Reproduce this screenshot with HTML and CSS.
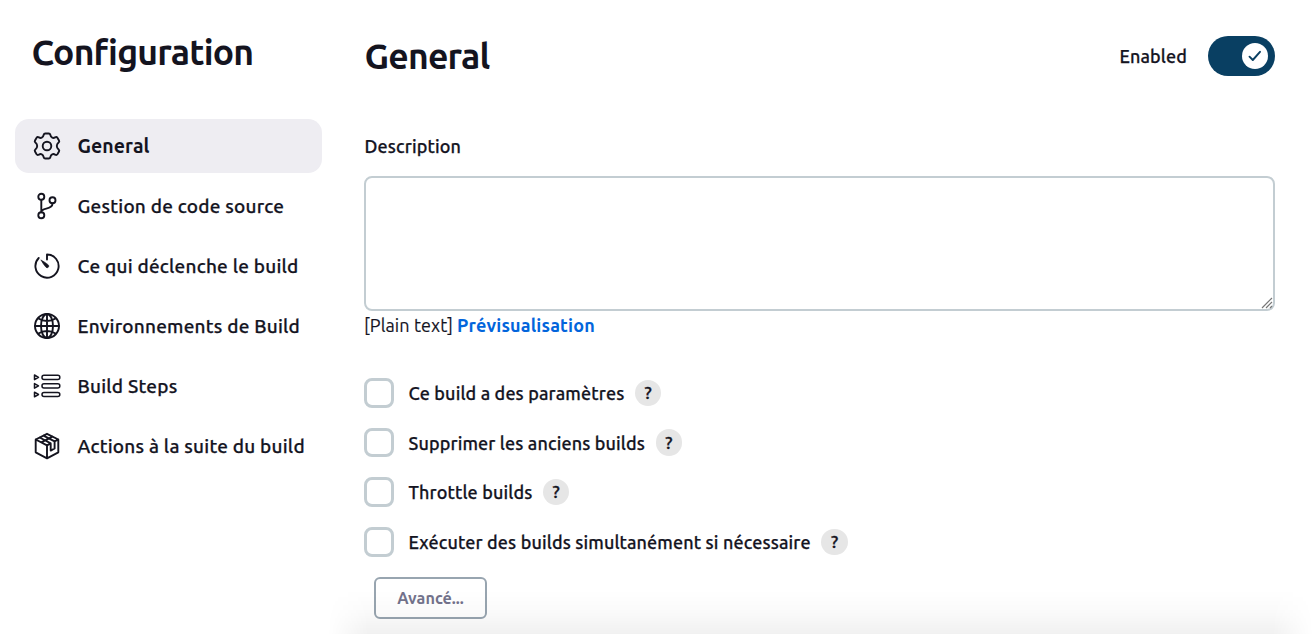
FILE: index.html
```html
<!DOCTYPE html>
<html lang="fr">
<head>
<meta charset="utf-8">
<title>Configuration</title>
<link rel="stylesheet" href="styles.css">
</head>
<body>
<div class="page">
  <aside class="sidebar">
    <h1 class="title">Configuration</h1>
    <nav class="menu">
      <a class="item active">
        <svg class="icon" viewBox="0 0 28 28"><path d="M12.300 1.500h3.400q1.300 0 1.600 1.300.5 2.300 1.900 2.900 1.400.6 2.900-.3 1.500-.8 2.300.3l1.600 2.700q.7 1.200-.4 2.100-1.800 1.500-1.800 3.500t1.800 3.500q1.100.9.400 2.100l-1.600 2.700q-.8 1.100-2.300.3-1.500-.9-2.900-.3-1.400.6-1.900 2.900-.3 1.300-1.600 1.300h-3.400q-1.300 0-1.600-1.300-.5-2.300-1.900-2.900-1.400-.6-2.900.3-1.500.8-2.300-.3L2 19.600q-.7-1.200.4-2.100 1.800-1.500 1.800-3.500T2.400 10.500Q1.300 9.600 2 8.400l1.600-2.700q.8-1.100 2.300-.3 1.500.9 2.900.3 1.400-.6 1.900-2.900.3-1.300 1.600-1.300z"/><circle cx="14" cy="14" r="4.300"/></svg>
        <span>General</span></a>
      <a class="item">
        <svg class="icon" viewBox="0 0 28 28"><circle cx="8.300" cy="4.800" r="3"/><circle cx="8.300" cy="23.200" r="3"/><circle cx="19.500" cy="8.300" r="3"/><path d="M8.300 8v12M19.500 11.500c0 7-11.200 3.500-11.200 8.700"/></svg>
        <span>Gestion de code source</span></a>
      <a class="item">
        <svg class="icon" viewBox="0 0 28 28"><path d="M14 7.500V2.500A11.600 11.600 0 1 1 5.700 6"/><path class="solid" d="M8.200 8.200c2.600 1.400 5.300 3.100 7.100 4.700a1.600 1.600 0 0 1-2.300 2.300c-1.700-1.800-3.500-4.400-4.800-7z"/></svg>
        <span>Ce qui déclenche le build</span></a>
      <a class="item">
        <svg class="icon" viewBox="0 0 28 28"><circle cx="14" cy="14" r="12"/><ellipse cx="14" cy="14" rx="6" ry="12"/><path d="M14 2v24M2 14h24M5.500 6.500c5 3.300 12 3.300 17 0M5.500 21.500c5-3.300 12-3.300 17 0"/></svg>
        <span>Environnements de Build</span></a>
      <a class="item">
        <svg class="icon thin" viewBox="0 0 28 28"><rect x="9" y="3.200" width="17.800" height="4.200" rx="2"/><rect x="9" y="11.800" width="17.800" height="4.200" rx="2"/><rect x="9" y="20.400" width="17.800" height="4.200" rx="2"/><path d="M1.500 3l4 2.300-4 2.300zM1.500 11.600l4 2.300-4 2.300zM1.500 20.200l4 2.300-4 2.300z"/></svg>
        <span>Build Steps</span></a>
      <a class="item">
        <svg class="icon box" viewBox="0 0 28 28"><path d="M14 1.800l11.300 5.700v12.800L14 26.300 2.700 20.300V7.500zM2.700 7.500L14 13.300l3.700-1.900M21.600 9.400l3.700-1.900M14 13.300v13M6.700 5.500l11 5.900v7.200l3.900-2.100V9.400L10.500 3.600M8.300 10.300l11.200-5.700"/></svg>
        <span>Actions à la suite du build</span></a>
    </nav>
  </aside>
  <main class="main">
    <header class="head">
      <h2 class="title">General</h2>
      <div class="enabled"><span class="label">Enabled</span>
        <span class="toggle"><span class="knob"><svg class="check" viewBox="0 0 14 14"><path d="M1.500 7.700l3.300 3.300 7.200-8.200"/></svg></span></span></div>
    </header>
    <label class="label desc" for="description">Description</label>
    <div class="field">
      <textarea id="description" class="area"></textarea>
      <svg class="grip" viewBox="0 0 12 12"><path d="M1 11L11 1M5 11l6-6M9 11l2-2"/></svg>
    </div>
    <div class="preview"><span class="plain">[Plain text]</span><a class="link">Prévisualisation</a></div>
    <div class="options">
      <div class="option"><span class="checkbox"></span><span class="label">Ce build a des paramètres</span><span class="help">?</span></div>
      <div class="option"><span class="checkbox"></span><span class="label">Supprimer les anciens builds</span><span class="help">?</span></div>
      <div class="option"><span class="checkbox"></span><span class="label">Throttle builds</span><span class="help">?</span></div>
      <div class="option"><span class="checkbox"></span><span class="label">Exécuter des builds simultanément si nécessaire</span><span class="help">?</span></div>
    </div>
    <button class="advanced">Avancé...</button>
  </main>
  <div class="fade"></div>
</div>
</body>
</html>
```
FILE: styles.css
```css
* { box-sizing: border-box; }
body { margin: 0; background: #fff; color: #14141f; font-family: Ubuntu, "Noto Sans", sans-serif; }
.page { position: relative; display: flex; width: 1313px; height: 635px; overflow: hidden; }
.sidebar { width: 364px; padding: 28px 42px 0 15px; }
.title { margin: 0; font-size: 35.500px; line-height: 48px; font-weight: 700; letter-spacing: -.8px; white-space: nowrap; }
.sidebar .title { padding-left: 16.500px; }
.menu { display: flex; flex-direction: column; gap: 6px; margin-top: 43px; }
.item { display: flex; align-items: center; gap: 16.500px; height: 54px; padding-left: 18px; border-radius: 14px; font-size: 19px; font-weight: 500; letter-spacing: .22px; -webkit-text-stroke: .25px #14141f; white-space: nowrap; }
.active { background: #eeedf2; font-size: 19.500px; font-weight: 700; letter-spacing: .05px; -webkit-text-stroke: 0; }
.icon { width: 28px; height: 28px; flex: none; fill: none; stroke: #14141f; stroke-width: 1.900; stroke-linejoin: round; stroke-linecap: round; }
.icon.thin { stroke-width: 1.500; }
.icon.box { stroke-width: 1.900; }
.icon .solid { fill: #14141f; stroke: #14141f; stroke-width: .6; }
.main { width: 911px; padding-top: 32px; display: flex; flex-direction: column; align-items: flex-start; }
.head { display: flex; justify-content: space-between; width: 100%; height: 48px; padding-left: .5px; }
.enabled { display: flex; align-items: center; gap: 21px; }
.label { font-size: 18px; line-height: 26px; font-weight: 500; letter-spacing: .13px; -webkit-text-stroke: .25px #14141f; white-space: nowrap; }
.toggle { display: flex; align-items: center; justify-content: flex-end; width: 67px; height: 40px; padding-right: 7px; border-radius: 20px; background: #093f62; }
.knob { display: flex; align-items: center; justify-content: center; width: 26px; height: 26px; border-radius: 50%; background: #fff; }
.check { width: 14px; height: 14px; fill: none; stroke: #093f62; stroke-width: 1.900; stroke-linecap: round; stroke-linejoin: round; }
.desc { margin: 53px 0 0 .5px; }
.field { position: relative; margin-top: 17px; }
.area { display: block; width: 911px; height: 135px; margin: 0; border: 2px solid #c3cdd2; border-radius: 8px; background: #fff; resize: none; outline: none; }
.grip { position: absolute; right: 2px; bottom: 2px; width: 12px; height: 12px; fill: none; stroke: #777; stroke-width: 1.200; }
.preview { display: flex; gap: 4px; margin: 1px 0 0; font-size: 18px; line-height: 26px; white-space: nowrap; }
.plain { letter-spacing: .1px; -webkit-text-stroke: .15px #14141f; }
.link { color: #0265dc; font-weight: 700; letter-spacing: .16px; }
.options { display: flex; flex-direction: column; gap: 20px; margin-top: 40px; }
.option { display: flex; align-items: center; height: 29.700px; }
.checkbox { width: 30px; height: 29.700px; margin-right: 14.500px; border: 3px solid #c3cdd2; border-radius: 8px; }
.help { display: flex; align-items: center; justify-content: center; width: 26.500px; height: 26.500px; margin-left: 10.500px; border-radius: 50%; background: #e6e6e6; font-size: 17.500px; font-weight: 500; line-height: 26px; -webkit-text-stroke: .35px #14141f; }
.advanced { width: 113px; height: 42px; margin: 20px 0 0 10px; padding: 0; border: 2px solid #98a5b0; border-radius: 6px; background: #fff; color: #73738c; font: 700 16.200px/24px Ubuntu, "Noto Sans", sans-serif; white-space: nowrap; }
.fade { position: absolute; left: 328px; right: 0; bottom: 1px; height: 44px; background: linear-gradient(to bottom, rgba(0,0,0,0), rgba(0,0,0,.02) 50%, rgba(0,0,0,.055)); -webkit-mask-image: linear-gradient(to right, transparent, #000 40px, #000 calc(100% - 40px), transparent); mask-image: linear-gradient(to right, transparent, #000 40px, #000 calc(100% - 40px), transparent); pointer-events: none; }
```
